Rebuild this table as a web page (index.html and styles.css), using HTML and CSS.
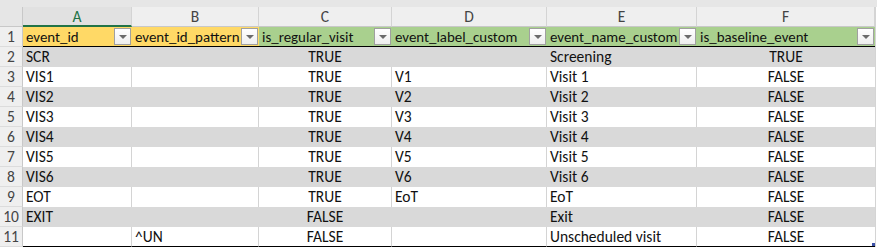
FILE: index.html
```html
<!DOCTYPE html>
<html>
<head>
<meta charset="utf-8">
<link rel="stylesheet" href="styles.css">
</head>
<body>
<div class="sheet">
  <div class="topstrip"></div>
  <div class="grid">
    <div class="corner"></div>
    <div class="colhead sel">A</div>
    <div class="colhead">B</div>
    <div class="colhead">C</div>
    <div class="colhead">D</div>
    <div class="colhead">E</div>
    <div class="colhead">F</div>

    <div class="rowhead">1</div>
    <div class="th yellow"><span>event_id</span><i class="dd"></i></div>
    <div class="th yellow"><span>event_id_pattern</span><i class="dd"></i></div>
    <div class="th green"><span>is_regular_visit</span><i class="dd"></i></div>
    <div class="th green"><span>event_label_custom</span><i class="dd"></i></div>
    <div class="th green"><span>event_name_custom</span><i class="dd"></i></div>
    <div class="th green last"><span>is_baseline_event</span><i class="dd"></i></div>

    <div class="rowhead">2</div>
    <div class="td band">SCR</div><div class="td band"></div><div class="td band c">TRUE</div><div class="td band"></div><div class="td band">Screening</div><div class="td band c last">TRUE</div>

    <div class="rowhead">3</div>
    <div class="td">VIS1</div><div class="td"></div><div class="td c">TRUE</div><div class="td">V1</div><div class="td">Visit 1</div><div class="td c last">FALSE</div>

    <div class="rowhead">4</div>
    <div class="td band">VIS2</div><div class="td band"></div><div class="td band c">TRUE</div><div class="td band">V2</div><div class="td band">Visit 2</div><div class="td band c last">FALSE</div>

    <div class="rowhead">5</div>
    <div class="td">VIS3</div><div class="td"></div><div class="td c">TRUE</div><div class="td">V3</div><div class="td">Visit 3</div><div class="td c last">FALSE</div>

    <div class="rowhead">6</div>
    <div class="td band">VIS4</div><div class="td band"></div><div class="td band c">TRUE</div><div class="td band">V4</div><div class="td band">Visit 4</div><div class="td band c last">FALSE</div>

    <div class="rowhead">7</div>
    <div class="td">VIS5</div><div class="td"></div><div class="td c">TRUE</div><div class="td">V5</div><div class="td">Visit 5</div><div class="td c last">FALSE</div>

    <div class="rowhead">8</div>
    <div class="td band">VIS6</div><div class="td band"></div><div class="td band c">TRUE</div><div class="td band">V6</div><div class="td band">Visit 6</div><div class="td band c last">FALSE</div>

    <div class="rowhead">9</div>
    <div class="td">EOT</div><div class="td"></div><div class="td c">TRUE</div><div class="td">EoT</div><div class="td">EoT</div><div class="td c last">FALSE</div>

    <div class="rowhead">10</div>
    <div class="td band">EXIT</div><div class="td band"></div><div class="td band c">FALSE</div><div class="td band"></div><div class="td band">Exit</div><div class="td band c last">FALSE</div>

    <div class="rowhead">11</div>
    <div class="td end"></div><div class="td end">^UN</div><div class="td end c">FALSE</div><div class="td end"></div><div class="td end">Unscheduled visit</div><div class="td end c last"><span>FALSE</span><i class="handle"></i></div>
  </div>
</div>
</body>
</html>
```

FILE: styles.css
```css
html, body {
  margin: 0;
  padding: 0;
  background: #ffffff;
}
.sheet {
  width: 877px;
  height: 247px;
  overflow: hidden;
  font-family: Carlito, Calibri, Lato, "Liberation Sans", sans-serif;
  font-size: 15.5px;
  color: #111;
}
.topstrip {
  height: 7px;
  background: #e6e6e6;
}
.grid {
  display: grid;
  grid-template-columns: 23px 109px 127px 133px 155px 150px 178px;
  grid-template-rows: 20px repeat(11, 20px);
  width: 875px;
  border-right: 1px solid #d4d4d4;
}
.corner {
  background: #e6e6e6;
  border-right: 1px solid #c8c8c8;
  border-bottom: 1px solid #c8c8c8;
  box-sizing: border-box;
}
.colhead {
  box-sizing: border-box;
  background: #efefef;
  border-right: 1px solid #d4d4d4;
  border-bottom: 1px solid #c8c8c8;
  text-align: center;
  line-height: 19px;
  color: #444;
}
.colhead.sel {
  background: #e1e1e1;
  color: #217346;
  border-bottom: 2px solid #217346;
}
.rowhead {
  box-sizing: border-box;
  background: #efefef;
  border-right: 1px solid #c8c8c8;
  border-bottom: 1px solid #dcdcdc;
  text-align: center;
  line-height: 20px;
  color: #444;
}
.th {
  box-sizing: border-box;
  display: flex;
  align-items: flex-start;
  justify-content: space-between;
  padding: 1px 1px 0 3px;
  border-bottom: 1px solid #000;
  font-size: 14.9px;
  line-height: 18px;
  white-space: nowrap;
  overflow: hidden;
}
.th span {
  flex: none;
}
.yellow { background: #ffd966; }
.green { background: #a9d08e; }
.dd {
  flex: none;
  position: relative;
  margin-left: auto;
  width: 17px;
  height: 17px;
  box-sizing: border-box;
  border: 1px solid #a0a0a0;
  background: linear-gradient(#ffffff, #eeeeee);
}
.dd::after {
  content: "";
  position: absolute;
  left: 4px;
  top: 6px;
  border-left: 4px solid transparent;
  border-right: 4px solid transparent;
  border-top: 4px solid #6b6b6b;
}
.td {
  box-sizing: border-box;
  padding: 0 3px;
  line-height: 20px;
  white-space: nowrap;
  overflow: hidden;
  background: #ffffff;
  border-right: 1px solid #d4d4d4;
}
.td.band {
  background: #d9d9d9;
  border-right-color: #d9d9d9;
}
.td.c { text-align: center; }
.td.last { border-right: none; }
.td.end {
  border-bottom: 1px solid #000;
  line-height: 19px;
}
.td.end.last {
  display: flex;
  justify-content: center;
  position: relative;
}
.handle {
  position: absolute;
  right: 0;
  bottom: 0;
  width: 3px;
  height: 3px;
  background: #3b50a8;
}
```
